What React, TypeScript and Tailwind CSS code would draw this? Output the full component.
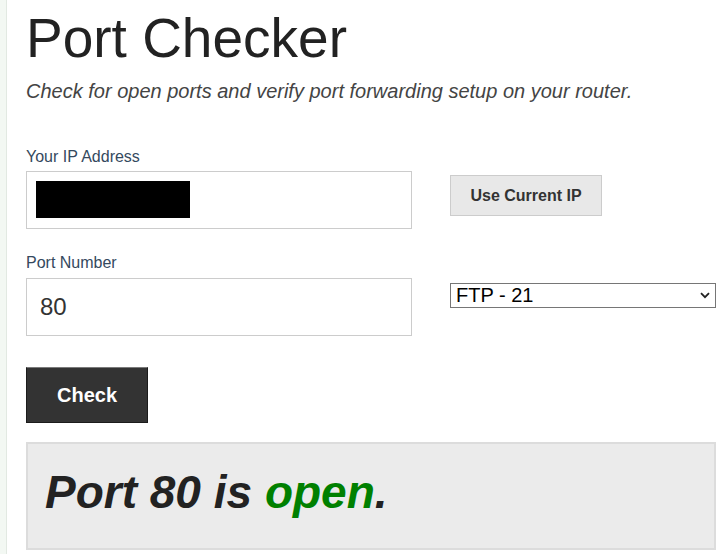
import React from 'react';

const font = { fontFamily: '"Liberation Sans", Arial, sans-serif' };

export default function App() {
  return (
    <div className="flex min-h-screen bg-white text-[#222]" style={font}>
      <div className="w-[7px] shrink-0 bg-[#f3f8f3] border-r border-[#e2e9e2]" />
      <main className="pl-[19px] w-[709px]">
        <h1 className="mt-[11px] text-[55px] leading-[55px] font-normal text-[#222]">Port Checker</h1>
        <p className="mt-[13px] text-[20px] leading-[24px] italic text-[#444]">
          Check for open ports and verify port forwarding setup on your router.
        </p>

        <label className="block mt-[44px] mb-[4px] text-[16px] leading-[20px] text-[#34495e]">Your IP Address</label>
        <div className="flex items-start gap-[38px]">
          <div className="w-[386px] h-[58px] border border-[#ccc] bg-white pl-[9px] pt-[9px]">
            <div className="w-[154px] h-[37px] bg-black" />
          </div>
          <button className="mt-[4px] h-[41px] w-[152px] bg-[#e8e8e8] border border-[#ccc] text-[16px] font-bold text-[#333]">
            Use Current IP
          </button>
        </div>

        <label className="block mt-[24px] mb-[5px] text-[16px] leading-[20px] text-[#34495e]">Port Number</label>
        <div className="flex items-start gap-[38px]">
          <input
            defaultValue="80"
            className="w-[386px] h-[58px] border border-[#ccc] bg-white pl-[13px] text-[24px] text-[#333] outline-none"
            style={font}
          />
          <div className="relative mt-[5px] w-[266px] h-[25px] border border-[#767676] bg-white">
            <select
              className="appearance-none w-full h-full bg-transparent pl-[5px] text-[20px] leading-[23px] text-black outline-none"
              style={font}
            >
              <option>FTP - 21</option>
            </select>
            <svg className="absolute right-[5px] top-[8px] pointer-events-none" width="10" height="7" viewBox="0 0 10 7">
              <path d="M1 1.2 L5 5.2 L9 1.2" fill="none" stroke="#222" strokeWidth="1.8" />
            </svg>
          </div>
        </div>

        <button className="block mt-[31px] w-[122px] h-[56px] bg-[#333] border border-[#1b1b1b] border-t-[#7a7a7a] text-white text-[20px] font-bold">
          Check
        </button>

        <div className="mt-[19px] h-[108px] border-2 border-[#dcdcdc] bg-[#ebebeb] pl-[17px] pt-[20px]">
          <p className="text-[46px] leading-[56px] font-bold italic text-[#222]">
            Port 80 is <span className="text-[#008000]">open</span>.
          </p>
        </div>
      </main>
    </div>
  );
}
